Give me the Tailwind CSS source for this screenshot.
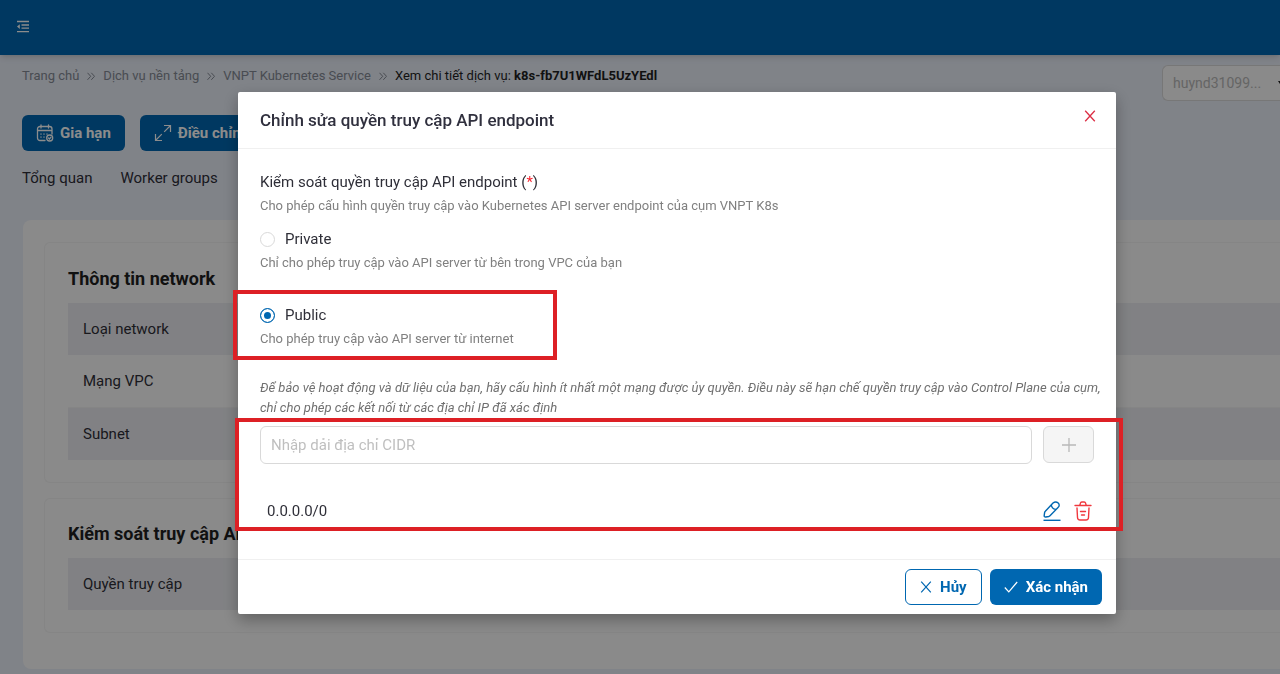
<!DOCTYPE html>
<html lang="vi">
<head>
<meta charset="utf-8">
<meta name="viewport" content="width=device-width, initial-scale=1">
<title>VNPT Kubernetes Service</title>
<script src="https://cdn.jsdelivr.net/npm/@tailwindcss/browser@4"></script>
</head>
<body class="h-screen overflow-hidden bg-[#e9eef8] font-['Roboto','Noto_Sans',sans-serif] text-[15px] leading-5 text-[#2f2f38]">

<header class="relative flex h-[55px] items-center bg-[#0067b1] pb-[2px] pl-4 shadow-md">
  <button type="button" aria-label="Thu gọn menu" class="text-white">
    <svg class="size-[14px]" viewBox="0 0 14 14" fill="none" stroke="currentColor" stroke-width="1.300"><path d="M1 1.500h12M5.500 5h7.500M5.500 8.200h7.500M1 11.700h12"/><path d="M3.800 4.200v4.800L1 6.600z" fill="currentColor" stroke="none"/></svg>
  </button>
</header>

<div class="flex items-start justify-between pl-[22px]">
  <nav aria-label="Breadcrumb" class="flex items-center gap-2 pt-[11px] text-[13px] text-[#858b95]">
    <a href="#">Trang chủ</a>
    <svg class="size-2" viewBox="0 0 8 8" fill="none" stroke="currentColor"><path d="M.5.8 3.700 4.300.5 7.800M4.300.8l3.200 3.500-3.200 3.500"/></svg>
    <a href="#">Dịch vụ nền tảng</a>
    <svg class="size-2" viewBox="0 0 8 8" fill="none" stroke="currentColor"><path d="M.5.8 3.700 4.300.5 7.800M4.300.8l3.200 3.500-3.200 3.500"/></svg>
    <a href="#">VNPT Kubernetes Service</a>
    <svg class="size-2" viewBox="0 0 8 8" fill="none" stroke="currentColor"><path d="M.5.8 3.700 4.300.5 7.800M4.300.8l3.200 3.500-3.200 3.500"/></svg>
    <span class="text-[#1f1f1f]">Xem chi tiết dịch vụ: <b class="font-bold">k8s-fb7U1WFdL5UzYEdl</b></span>
  </nav>
  <div class="relative mt-[10px] w-[118px]">
    <label class="sr-only" for="account">Tài khoản</label>
    <select id="account" class="h-9 w-full appearance-none rounded-l-md border border-r-0 border-[#d9d9d9] bg-[#fbfbfb] pr-0 pl-[10px] text-[14px] text-[#b8b8b8]"><option>huynd31099...</option></select>
    <svg class="absolute top-4 right-0 h-[3px] w-[2px]" viewBox="0 0 2 3" fill="#1f1f1f"><path d="M0 0h2v3z"/></svg>
  </div>
</div>

<div class="flex gap-[15px] px-[22px] pt-[14px]">
  <button type="button" class="flex h-9 items-center gap-[6px] rounded-md bg-[#0067b1] px-[14px] font-bold text-white">
    <svg class="size-[18px]" viewBox="0 0 18 18" fill="none" stroke="currentColor" stroke-width="1.300" stroke-linecap="round"><path d="M9 16.500H4A2.500 2.500 0 0 1 1.500 14V5A2.500 2.500 0 0 1 4 2.500h9.500A2.500 2.500 0 0 1 16 5v5M1.500 6.500H16M5 1v3M12.500 1v3M5 10v.2M8 10v.2M11 10v.2M5 13v.2M8 13v.2"/><circle cx="13.700" cy="14" r="3"/><path d="m12.500 14 1 1 1.500-1.800"/></svg>
    Gia hạn
  </button>
  <button type="button" class="flex h-9 items-center gap-[6px] rounded-md bg-[#0067b1] px-[14px] font-bold text-white">
    <svg class="size-[18px]" viewBox="0 0 18 18" fill="none" stroke="currentColor" stroke-width="1.200"><path d="M1.500 10v6.500H8M1.500 16.500l6.300-6.300M10 1.500h6.500V8M16.500 1.500l-6.300 6.300"/></svg>
    Điều chỉnh
  </button>
</div>

<nav aria-label="Chi tiết dịch vụ" class="flex gap-7 px-[22px] pt-[17px]">
  <a href="#">Tổng quan</a>
  <a href="#">Worker groups</a>
</nav>

<main class="mt-8 ml-[23px] rounded-l-lg bg-[#fbfbfb] pt-[22px] pb-9 pl-[21px]">
  <section class="rounded-l-md border border-r-0 border-[#f2f2f2] pt-6 pb-[22px] pl-[23px]">
    <h2 class="text-[18px] leading-6 font-bold text-[#1f1f1f]">Thông tin network</h2>
    <table class="mt-3 w-full text-left">
      <tbody>
        <tr class="h-[52px] bg-[#ebecf0]"><th scope="row" class="px-[15px] font-normal">Loại network</th></tr>
        <tr class="h-[52px]"><th scope="row" class="border-b border-[#f2f2f2] px-[15px] font-normal">Mạng VPC</th></tr>
        <tr class="h-[53px] bg-[#ebecf0]"><th scope="row" class="px-[15px] font-normal">Subnet</th></tr>
      </tbody>
    </table>
  </section>
  <section class="mt-[15px] rounded-l-md border border-r-0 border-[#f2f2f2] pt-[23px] pb-[22px] pl-[23px]">
    <h2 class="text-[18px] leading-6 font-bold text-[#1f1f1f]">Kiểm soát truy cập API</h2>
    <table class="mt-3 w-full text-left">
      <tbody>
        <tr class="h-[52px] bg-[#ebecf0]"><th scope="row" class="px-[15px] font-normal">Quyền truy cập</th></tr>
      </tbody>
    </table>
  </section>
</main>

<div class="fixed inset-0 bg-black/45 pt-[92px] pr-[164px] pl-[238px]">
  <form role="dialog" aria-modal="true" aria-labelledby="dialog-title" class="relative rounded-xs bg-white shadow-[0_6px_16px_rgba(0,0,0,0.3)]">
    <div class="flex h-[57px] items-center justify-between border-b border-[#f0f0f0] px-[22px]">
      <h1 id="dialog-title" class="text-[17px] font-medium text-[#30303e]">Chỉnh sửa quyền truy cập API endpoint</h1>
      <button type="button" aria-label="Đóng" class="-mr-1 mb-2 p-[2px] text-[#dc2f45]">
        <svg class="size-3" viewBox="0 0 12 12" fill="none" stroke="currentColor" stroke-width="1.300"><path d="M1.200.8 10.800 11.200M10.800.8 1.200 11.200"/></svg>
      </button>
    </div>

    <fieldset class="px-[22px] pt-[23px]">
      <legend class="float-left w-full">Kiểm soát quyền truy cập API endpoint (<span class="text-[#f5222d]">*</span>)</legend>
      <p class="clear-both pt-1 text-[13px] text-[#808080]">Cho phép cấu hình quyền truy cập vào Kubernetes API server endpoint của cụm VNPT K8s</p>

      <label class="mt-[13px] flex items-center gap-[10px]">
        <input type="radio" name="access" value="private" class="size-[15px] appearance-none rounded-full border border-[#d9d9d9] checked:border-[#0067b1] checked:bg-[#0067b1] checked:shadow-[inset_0_0_0_3px_white]">Private
      </label>
      <p class="mt-1 text-[13px] text-[#808080]">Chỉ cho phép truy cập vào API server từ bên trong VPC của bạn</p>

      <label class="mt-8 flex items-center gap-[10px]">
        <input type="radio" name="access" value="public" checked class="size-[15px] appearance-none rounded-full border border-[#d9d9d9] checked:border-[#0067b1] checked:bg-[#0067b1] checked:shadow-[inset_0_0_0_3px_white]">Public
      </label>
      <p class="mt-1 text-[13px] text-[#808080]">Cho phép truy cập vào API server từ internet</p>
    </fieldset>

    <div class="px-[22px] pt-[29px] pb-[38px]">
      <p class="-mr-4 text-[13px] text-[#707070] italic">Để bảo vệ hoạt động và dữ liệu của bạn, hãy cấu hình ít nhất một mạng được ủy quyền. Điều này sẽ hạn chế quyền truy cập vào Control Plane của cụm, <br>chỉ cho phép các kết nối từ các địa chỉ IP đã xác định</p>
      <div class="mt-2 flex gap-[11px]">
        <input type="text" aria-label="Dải địa chỉ CIDR" placeholder="Nhập dải địa chỉ CIDR" class="h-[38px] min-w-0 flex-1 rounded-md border border-[#d9d9d9] px-[10px] placeholder:text-[#bfbfbf]">
        <button type="button" disabled aria-label="Thêm" class="flex h-[37px] w-[51px] items-center justify-center rounded-md border border-[#d9d9d9] bg-[#f5f5f5] text-[#b8b8b8]">
          <svg class="size-4" viewBox="0 0 16 16" fill="none" stroke="currentColor" stroke-width="1.300"><path d="M8 1v14M1 8h14"/></svg>
        </button>
      </div>
      <div class="mt-[37px] flex items-center pr-[2px] pl-[7px]">
        <span class="flex-1">0.0.0.0/0</span>
        <button type="button" aria-label="Sửa" class="text-[#0067b1]">
          <svg class="size-5" viewBox="0 0 20 20" fill="none" stroke="currentColor" stroke-width="1.400" stroke-linejoin="round"><path d="M1.500 19.300h17"/><path d="m11 2.100-7.700 8.200c-.4.400-.6.900-.7 1.400l-.4 3c-.1 1 .6 1.500 1.600 1.300l2.900-.5c.5-.1 1-.4 1.300-.7L16 6.600c1.600-1.500 1.500-3.200.2-4.500-1.500-1.400-3.500-1.500-5.200 0zM9.300 4c.4 2.700 2.400 4.300 5 4.500"/></svg>
        </button>
        <button type="button" aria-label="Xóa" class="ml-3 text-[#f0383e]">
          <svg class="h-5 w-[18px]" viewBox="0 0 18 20" fill="none" stroke="currentColor" stroke-width="1.400" stroke-linecap="round" stroke-linejoin="round"><path d="M1 4.500h16M5.800 4.300l.6-2.100c.2-.8.600-1.200 1.400-1.200h2.400c.8 0 1.200.4 1.400 1.200l.6 2.100M3 7l.5 9.500c.1 1.700.8 2.500 2.500 2.500h6c1.700 0 2.400-.8 2.500-2.500L15 7M6.500 10.500h5M7.500 14h3"/></svg>
        </button>
      </div>
    </div>

    <div class="flex h-[55px] items-center justify-end gap-2 border-t border-[#f0f0f0] pr-[14px]">
      <button type="button" class="flex h-9 items-center gap-2 rounded-md border border-[#0067b1] px-[14px] font-bold text-[#0067b1]">
        <svg class="size-3" viewBox="0 0 12 12" fill="none" stroke="currentColor" stroke-width="1.200"><path d="M1.200.6 10.800 11.400M10.800.6 1.200 11.400"/></svg>Hủy
      </button>
      <button type="submit" class="flex h-9 items-center gap-2 rounded-md bg-[#0067b1] px-[14px] font-bold text-white">
        <svg class="size-[14px]" viewBox="0 0 14 14" fill="none" stroke="currentColor" stroke-width="1.200"><path d="m.8 7.500 4 4.300L13.200 2"/></svg>Xác nhận
      </button>
    </div>

    <div class="pointer-events-none absolute top-[198px] left-[-5px] h-[70px] w-[324px] border-4 border-[#dd2025]"></div>
    <div class="pointer-events-none absolute top-[326px] right-[-7px] left-[-3px] h-[113px] border-4 border-[#dd2025]"></div>
  </form>
</div>
</body>
</html>
